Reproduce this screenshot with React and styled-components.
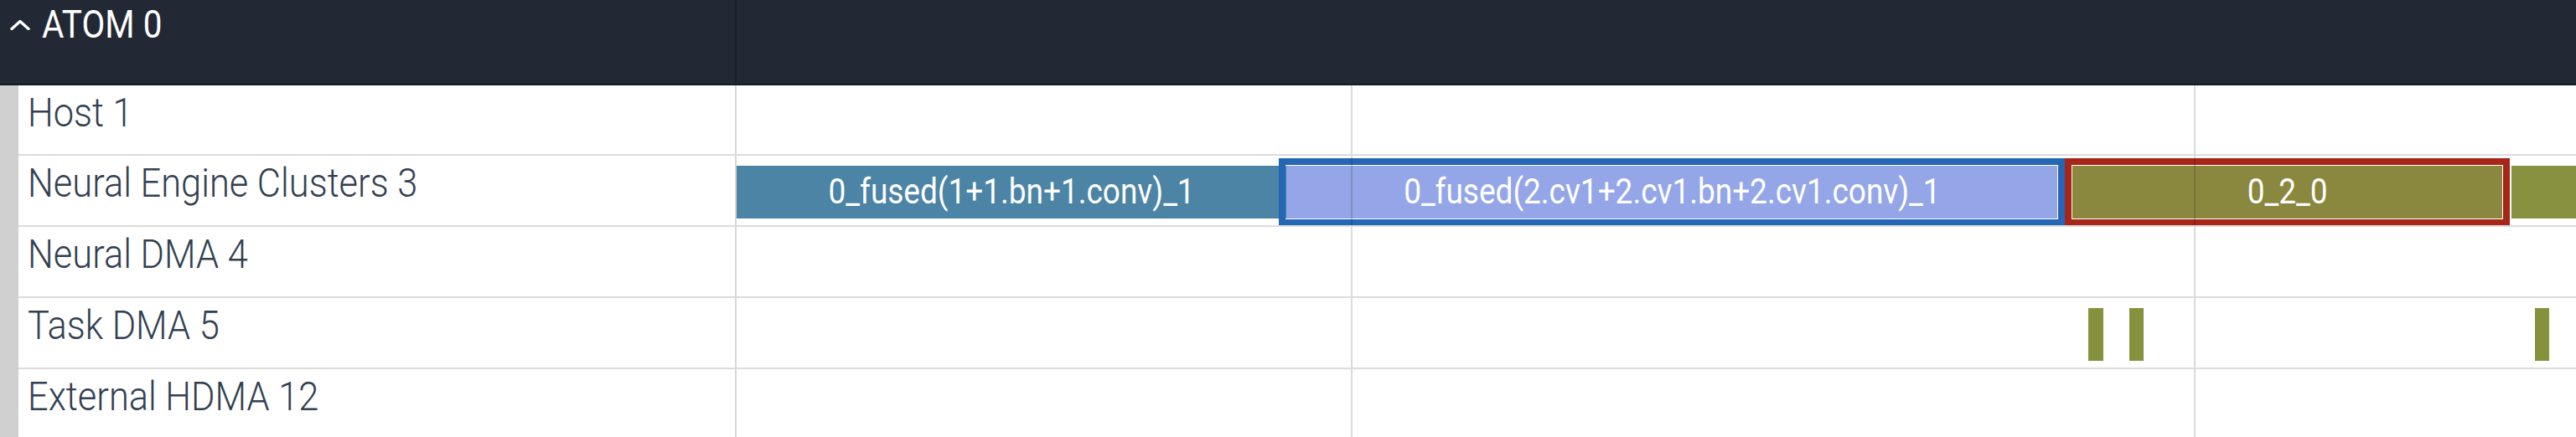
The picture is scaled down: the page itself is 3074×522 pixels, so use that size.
import React from "react";
import styled, { createGlobalStyle } from "styled-components";

const GlobalStyle = createGlobalStyle`
  html, body { margin: 0; padding: 0; background: #ffffff; }
  body { font-family: Roboto, "Noto Sans", sans-serif; overflow: hidden; }
`;

const Page = styled.div`
  width: 3074px;
  height: 522px;
  overflow: hidden;
  display: flex;
  flex-direction: column;
  background: #ffffff;
`;

const Header = styled.div`
  height: 100px;
  flex: none;
  display: grid;
  grid-template-columns: 879px 1fr;
  background: #222834;
  border-bottom: 2px solid #161a21;
`;

const HeaderTitle = styled.div`
  display: flex;
  align-items: flex-start;
  gap: 14px;
  padding: 2px 0 0 12px;
  border-right: 2px solid #1a1f28;
  color: #ffffff;
  font-size: 46px;
  font-weight: 400;
`;

const Caret = styled.svg`
  flex: none;
  margin-top: 21px;
`;

const Squeezed = styled.span`
  display: inline-block;
  white-space: nowrap;
  transform: scaleX(${(p) => p.$sx});
  transform-origin: ${(p) => p.$origin || "left"} center;
`;

const Row = styled.div`
  flex: none;
  height: ${(p) => p.$h}px;
  display: grid;
  grid-template-columns: 22px 857px 1fr;
`;

const Gutter = styled.div`
  background: #d0d0d0;
`;

const Label = styled.div`
  border-right: 2px solid #d8d8d8;
  border-bottom: ${(p) => (p.$last ? "none" : "2px solid #dcdcdc")};
  padding: 4px 0 0 11px;
  color: #324052;
  font-size: 49px;
  font-weight: 300;
  line-height: normal;
  overflow: hidden;
`;

const Track = styled.div`
  position: relative;
  overflow: hidden;
  border-bottom: ${(p) => (p.$last ? "none" : "2px solid #dcdcdc")};
`;

const Bar = styled.div`
  position: absolute;
  top: 12px;
  height: 63px;
  display: flex;
  align-items: center;
  justify-content: center;
  background: ${(p) => p.$color};
  color: #ffffff;
  font-size: 43px;
  font-weight: 400;
  padding-bottom: 3px;
  box-sizing: border-box;
  outline: ${(p) => (p.$outline ? `8px solid ${p.$outline}` : "none")};
  outline-offset: 1px;
  z-index: ${(p) => (p.$outline ? 2 : 1)};
`;

const GridLine = styled.div`
  position: absolute;
  top: 0;
  bottom: -2px;
  width: 2px;
  background: rgba(0, 0, 0, 0.14);
  z-index: 3;
  pointer-events: none;
`;

const GRID = [733, 1739];

const ROWS = [
  { label: "Host 1", h: 84, bars: [] },
  {
    label: "Neural Engine Clusters 3",
    h: 85,
    bars: [
      { left: 0, width: 656, color: "#4b84a5", text: "0_fused(1+1.bn+1.conv)_1" },
      {
        left: 656,
        width: 920,
        color: "#94a6e8",
        text: "0_fused(2.cv1+2.cv1.bn+2.cv1.conv)_1",
        outline: "#2566b5",
      },
      { left: 1594, width: 513, color: "#8a883e", text: "0_2_0", outline: "#a8251a" },
      { left: 2118, width: 120, color: "#87913f" },
    ],
  },
  { label: "Neural DMA 4", h: 85, bars: [] },
  {
    label: "Task DMA 5",
    h: 85,
    bars: [
      { left: 1613, width: 18, color: "#86913e" },
      { left: 1662, width: 17, color: "#86913e" },
      { left: 2146, width: 17, color: "#86913e" },
    ],
  },
  { label: "External HDMA 12", h: 81, bars: [], last: true },
];

export default function App() {
  return (
    <>
      <GlobalStyle />
      <Page>
        <Header>
          <HeaderTitle>
            <Caret width="24" height="13" viewBox="0 0 24 13">
              <polyline
                points="2,11.5 12,2.5 22,11.5"
                fill="none"
                stroke="#ffffff"
                strokeWidth="3.4"
                strokeLinecap="round"
                strokeLinejoin="round"
              />
            </Caret>
            <Squeezed $sx={0.88}>ATOM 0</Squeezed>
          </HeaderTitle>
          <div />
        </Header>
        {ROWS.map((row) => (
          <Row key={row.label} $h={row.h}>
            <Gutter />
            <Label $last={row.last}>
              <Squeezed $sx={0.886}>{row.label}</Squeezed>
            </Label>
            <Track $last={row.last}>
              {row.bars.map((b, i) => (
                <Bar
                  key={i}
                  $color={b.color}
                  $outline={b.outline}
                  style={{ left: b.left, width: b.width }}
                >
                  {b.text && (
                    <Squeezed $sx={0.86} $origin="center">
                      {b.text}
                    </Squeezed>
                  )}
                </Bar>
              ))}
              {GRID.map((x) => (
                <GridLine key={x} style={{ left: x }} />
              ))}
            </Track>
          </Row>
        ))}
      </Page>
    </>
  );
}
